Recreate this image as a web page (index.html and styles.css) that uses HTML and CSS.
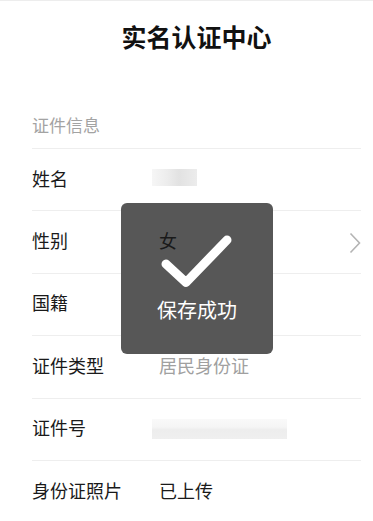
FILE: index.html
```html
<!DOCTYPE html>
<html lang="zh-CN">
<head>
<meta charset="utf-8">
<title>实名认证中心</title>
<link rel="stylesheet" href="styles.css">
</head>
<body>
<div class="page">
  <header class="title-bar">
    <h1 class="title">实名认证中心</h1>
  </header>
  <div class="section-label">证件信息</div>
  <ul class="rows">
    <li class="row">
      <span class="label">姓名</span>
      <span class="value"><span class="blur blur-name"></span></span>
    </li>
    <li class="row">
      <span class="label">性别</span>
      <span class="value value-top">女</span>
      <svg class="chevron" viewBox="0 0 12 22" width="12" height="22"><polyline points="1.5,1.5 10.5,11 1.5,20.5" fill="none" stroke="#b4b4b4" stroke-width="1.6"/></svg>
    </li>
    <li class="row">
      <span class="label">国籍</span>
      <span class="value">中国</span>
    </li>
    <li class="row">
      <span class="label">证件类型</span>
      <span class="value muted">居民身份证</span>
    </li>
    <li class="row">
      <span class="label">证件号</span>
      <span class="value"><span class="blur blur-id"></span></span>
    </li>
    <li class="row last">
      <span class="label">身份证照片</span>
      <span class="value">已上传</span>
    </li>
  </ul>
  <div class="toast">
    <svg class="toast-check" viewBox="0 0 152 90" width="152" height="90">
      <path d="M45 61 L65 79.5 L106 37" fill="none" stroke="#ffffff" stroke-width="9" stroke-linecap="round" stroke-linejoin="round"/>
    </svg>
    <div class="toast-text">保存成功</div>
  </div>
</div>
</body>
</html>
```

FILE: styles.css
```css
* { box-sizing: border-box; }
html, body { margin: 0; padding: 0; background: #ffffff; }
body {
  font-family: "Noto Sans CJK SC", "Noto Sans", "Liberation Sans", sans-serif;
  color: #1a1a1a;
}
.page {
  position: relative;
  width: 373px;
  height: 521px;
  overflow: hidden;
  border-top: 1px solid #ededed;
  padding: 0 12px 0 32px;
}
.title-bar {
  padding-top: 20px;
  display: flex;
  justify-content: center;
}
.title {
  margin: 0;
  font-size: 25px;
  line-height: 30px;
  font-weight: 700;
  color: #111111;
}
.section-label {
  margin-top: 64px;
  font-size: 17px;
  line-height: 20px;
  color: #a3a3a3;
  padding-bottom: 13px;
  border-bottom: 1px solid #eeeeee;
}
.rows { list-style: none; margin: 0; padding: 0; }
.row {
  position: relative;
  height: 62.4px;
  display: flex;
  align-items: center;
  padding-bottom: 4px;
  border-bottom: 1px solid #eeeeee;
}
.row.last { border-bottom: none; }
.label {
  width: 127px;
  font-size: 18px;
  line-height: 22px;
  color: #1a1a1a;
  flex: none;
}
.value {
  flex: 1;
  font-size: 18px;
  line-height: 22px;
  color: #1a1a1a;
  display: flex;
  align-items: center;
}
.value-top { position: relative; z-index: 3; }
.muted { color: #a0a0a0; }
.blur {
  display: block;
  margin-left: -7px;
  height: 17px;
}
.blur-name {
  width: 45px;
  background: linear-gradient(90deg, #f6f6f6 0%, #ececec 35%, #e2e2e2 60%, #ececec 100%);
}
.blur-id {
  width: 135px;
  height: 20px;
  margin-top: 4px;
  background: linear-gradient(180deg, #f9f9f9 0%, #f5f5f5 40%, #ededed 55%, #efefef 100%);
}
.chevron {
  position: absolute;
  right: 0;
  top: 21px;
}
.toast {
  position: absolute;
  left: 121px;
  top: 202px;
  width: 152px;
  height: 151px;
  border-radius: 6px;
  background: #575757;
  z-index: 2;
  display: flex;
  flex-direction: column;
  align-items: center;
}
.toast-check { display: block; flex: none; }
.toast-text {
  margin-top: 5px;
  font-size: 20px;
  line-height: 24px;
  color: #ffffff;
}
```
